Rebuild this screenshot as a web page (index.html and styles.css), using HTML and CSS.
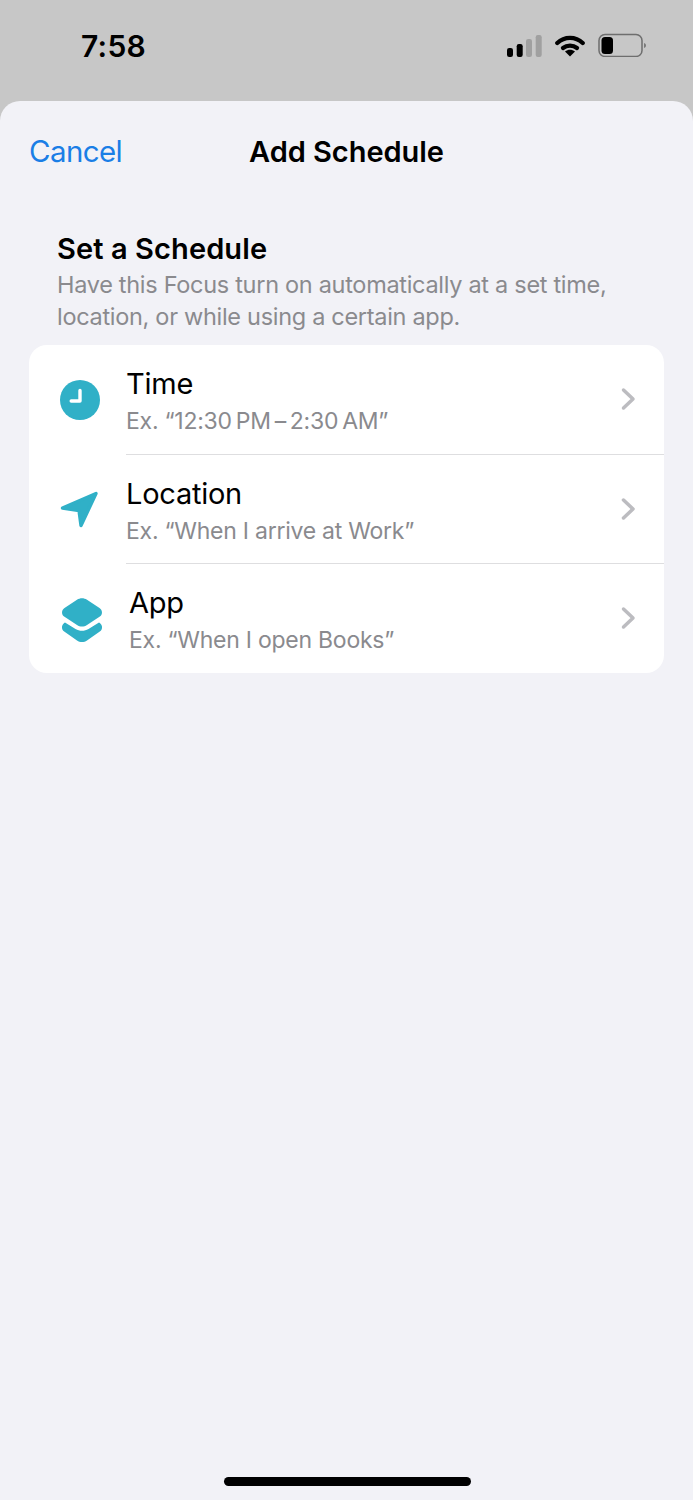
FILE: index.html
```html
<!DOCTYPE html>
<html lang="en">
<head>
    <meta charset="UTF-8">
    <meta name="viewport" content="width=device-width, initial-scale=1.0">
    <title>Add Schedule</title>
    <link rel="stylesheet" href="styles.css">
</head>
<body>
    <div class="status-bar">
        <span class="clock">7:58</span>
        <div class="status-icons">
            <svg class="signal" width="35" height="22" viewBox="0 0 35 22">
                <rect x="0" y="13" width="6" height="9" rx="2.200" fill="#000"/>
                <rect x="9.700" y="9" width="6" height="13" rx="2.200" fill="#000"/>
                <rect x="19" y="4" width="6" height="18" rx="2.200" fill="#a0a0a0"/>
                <rect x="28.700" y="0" width="6" height="22" rx="2.200" fill="#a0a0a0"/>
            </svg>
            <svg class="wifi" width="30" height="22" viewBox="0 0 30 22">
                <path d="M2.300 8C9.500 1.200 20.500 1.200 27.700 8" fill="none" stroke="#000" stroke-width="4.300" stroke-linecap="round"/>
                <path d="M8 13C12 9.800 18 9.800 22 13" fill="none" stroke="#000" stroke-width="4.300" stroke-linecap="round"/>
                <path d="M10 16.500C13 14 17 14 20 16.500L15 21.500Z" fill="#000"/>
            </svg>
            <svg class="battery" width="49" height="24" viewBox="0 0 49 24">
                <rect x="1" y="1.500" width="43" height="22" rx="6" fill="none" stroke="#6e6e6e" stroke-width="1.500"/>
                <rect x="3.500" y="4" width="11.500" height="17" rx="3.500" fill="#000"/>
                <path d="M46 10C47.500 10.500 48 11.500 48 12.500S47.500 14.500 46 15Z" fill="#7a7a7a"/>
            </svg>
        </div>
    </div>

    <div class="sheet">
        <div class="nav">
            <a class="cancel">Cancel</a>
            <h1>Add Schedule</h1>
        </div>

        <div class="intro">
            <h2>Set a Schedule</h2>
            <p>Have this Focus turn on automatically at a set time, location, or while using a certain app.</p>
        </div>

        <div class="card">
            <div class="row">
                <div class="row-icon">
                    <svg width="42" height="42" viewBox="0 0 42 42">
                        <circle cx="21" cy="21" r="20" fill="#30b0c7"/>
                        <path d="M21 11.500V22H12.200" fill="none" stroke="#fff" stroke-width="3.400" stroke-linecap="round" stroke-linejoin="round"/>
                    </svg>
                </div>
                <div class="row-body">
                    <div class="row-title">Time</div>
                    <div class="row-sub">Ex. “12:30&thinsp;PM&thinsp;–&thinsp;2:30&thinsp;AM”</div>
                    <svg class="chevron" width="16" height="24" viewBox="0 0 16 24"><path d="M2.500 3L12 12L2.500 21" fill="none" stroke="#bcbcc0" stroke-width="3.500" stroke-linecap="round" stroke-linejoin="round"/></svg>
                </div>
            </div>
            <div class="row">
                <div class="row-icon">
                    <svg width="42" height="42" viewBox="0 0 42 42">
                        <path d="M3.500 20L37 5.500L22 37.500L20 22.500Z" fill="#30b0c7" stroke="#30b0c7" stroke-width="3.400" stroke-linejoin="round"/>
                    </svg>
                </div>
                <div class="row-body">
                    <div class="row-title">Location</div>
                    <div class="row-sub">Ex. “When I arrive at Work”</div>
                    <svg class="chevron" width="16" height="24" viewBox="0 0 16 24"><path d="M2.500 3L12 12L2.500 21" fill="none" stroke="#bcbcc0" stroke-width="3.500" stroke-linecap="round" stroke-linejoin="round"/></svg>
                </div>
            </div>
            <div class="row row-app">
                <div class="row-icon">
                    <svg width="42" height="45" viewBox="0 0 42 45">
                        <path d="M16 1.700C19 -.3 23 -.3 26 1.700L38.500 10C41.800 12.300 41.800 16.500 38.500 18.800L26 27C23 29 19 29 16 27L3.500 18.800C.2 16.500 .2 12.300 3.500 10Z" fill="#30b0c7"/>
                        <path d="M4 24.500L14.500 31C18.500 33.400 23.500 33.400 27.500 31L38 24.500L38.800 25C41.800 27.200 41.800 31.500 38.800 33.500L26 42.500C23 44.500 19 44.500 16 42.500L3.200 33.500C.2 31.500 .2 27.200 3.200 25Z" fill="#30b0c7"/>
                    </svg>
                </div>
                <div class="row-body">
                    <div class="row-title">App</div>
                    <div class="row-sub">Ex. “When I open Books”</div>
                    <svg class="chevron" width="16" height="24" viewBox="0 0 16 24"><path d="M2.500 3L12 12L2.500 21" fill="none" stroke="#bcbcc0" stroke-width="3.500" stroke-linecap="round" stroke-linejoin="round"/></svg>
                </div>
            </div>
        </div>

        <div class="home-bar"></div>
    </div>
</body>
</html>
```

FILE: styles.css
```css
* {
    box-sizing: border-box;
}
html, body {
    margin: 0;
    padding: 0;
    height: 1500px;
    overflow: hidden;
}
body {
    font-family: Inter, "Liberation Sans", sans-serif;
    background-color: #c7c7c7;
    color: #000;
    display: flex;
    flex-direction: column;
}
.status-bar {
    height: 101px;
    flex-shrink: 0;
    display: flex;
    justify-content: space-between;
    padding: 26px 46px 0 81px;
}
.clock {
    font-size: 30px;
    font-weight: 600;
    line-height: 40px;
    letter-spacing: 0.3px;
}
.status-icons {
    display: flex;
    align-items: flex-start;
    padding-top: 7px;
}
.signal {
    margin: 2px 13px 0 0;
}
.wifi {
    margin: 2px 13px 0 0;
}
.sheet {
    position: relative;
    flex: 1;
    background-color: #f2f2f7;
    border-radius: 20px 20px 0 0;
    padding: 0 29px;
}
.nav {
    position: relative;
    height: 100px;
    display: flex;
    align-items: center;
    justify-content: center;
}
.nav h1 {
    margin: 0;
    font-size: 29px;
    font-weight: 600;
    letter-spacing: -0.05px;
}
.cancel {
    position: absolute;
    left: 0;
    top: 30px;
    font-size: 29.500px;
    line-height: 40px;
    letter-spacing: -0.6px;
    color: #1a7ee6;
}
.intro {
    padding: 29px 28px 0;
    height: 144px;
}
.intro h2 {
    margin: 0;
    font-size: 29px;
    line-height: 38px;
    font-weight: 600;
    letter-spacing: 0.1px;
}
.intro p {
    margin: 1px 0 0;
    font-size: 23.500px;
    line-height: 32px;
    letter-spacing: -0.3px;
    color: #8a8a8e;
}
.card {
    background-color: #fff;
    border-radius: 18px;
}
.row {
    height: 109.500px;
    display: flex;
}
.row:last-child {
    height: 109px;
}
.row-icon {
    width: 97px;
    flex-shrink: 0;
    display: flex;
    align-items: center;
    justify-content: center;
    padding-left: 5px;
}
.row-app .row-icon {
    width: 100px;
    padding: 3px 0 0 5px;
}
.row-body {
    position: relative;
    flex: 1;
    padding-top: 21px;
    border-bottom: 1.500px solid #dedee0;
}
.row:last-child .row-body {
    border-bottom: none;
}
.row-title {
    font-size: 29px;
    line-height: 36px;
    letter-spacing: -0.25px;
}
.row-sub {
    margin-top: 1px;
    font-size: 23px;
    line-height: 36px;
    letter-spacing: -0.25px;
    color: #8a8a8e;
}
.chevron {
    position: absolute;
    right: 27px;
    top: 42px;
}
.home-bar {
    position: absolute;
    left: 224px;
    bottom: 14px;
    width: 247px;
    height: 9px;
    border-radius: 5px;
    background-color: #000;
}
```
